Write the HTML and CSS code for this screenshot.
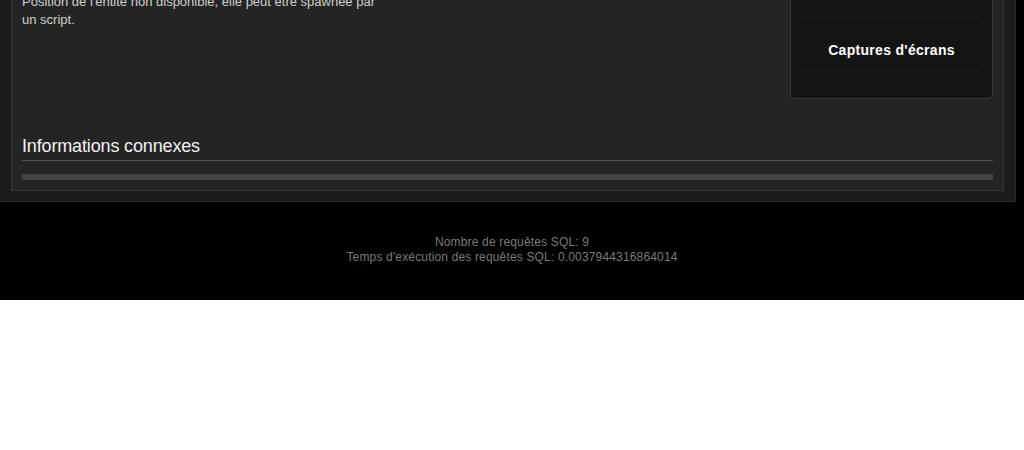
FILE: index.html
```html
<!DOCTYPE html>
<html lang="fr">
<head>
<meta charset="utf-8">
<title>Entité</title>
<link rel="stylesheet" href="styles.css">
</head>
<body>
<div class="site">
  <div class="main">
    <div class="panel">
      <div class="row">
        <p class="desc">Position de l'entité non disponible, elle peut être spawnée par un script.</p>
        <div class="shots">
          <div class="shots-title">Captures d'écrans</div>
        </div>
      </div>
      <h2 class="section-title">Informations connexes</h2>
      <div class="bar"></div>
    </div>
  </div>
  <div class="footer">
    <div>Nombre de requêtes SQL: 9</div>
    <div>Temps d'exécution des requêtes SQL: 0.0037944316864014</div>
  </div>
</div>
</body>
</html>
```
FILE: styles.css
```css
html, body {
  margin: 0;
  padding: 0;
  background: #fff;
  font-family: "Liberation Sans", Arial, sans-serif;
}
.site {
  background: #000;
  overflow: hidden;
}
.main {
  width: 1016px;
  margin-top: -60px;
  background: #1b1b1b;
  border-right: 1px solid #2c2c2c;
  border-bottom: 1px solid #2c2c2c;
  padding: 11px 11px 10px;
  box-sizing: border-box;
}
.panel {
  background: #242424;
  border: 1px solid #383838;
  padding: 10px;
}
.row {
  display: flex;
  justify-content: space-between;
  align-items: flex-start;
}
.desc {
  margin: 31px 0 0;
  width: 365px;
  font-size: 13px;
  line-height: 18px;
  color: #cfcfcf;
}
.shots {
  width: 203px;
  box-sizing: border-box;
  background: #141414;
  border: 1px solid #383838;
  border-radius: 5px;
  padding: 53px 14px 26px;
}
.shots-title {
  border-top: 1px solid #1c1c1c;
  border-bottom: 1px solid #1c1c1c;
  padding: 25px 0 13px;
  font-size: 14px;
  line-height: 16px;
  letter-spacing: 0.3px;
  font-weight: bold;
  color: #fff;
  text-align: center;
}
.section-title {
  margin: 36px 0 0;
  padding-bottom: 3px;
  border-bottom: 1px solid #555;
  font-size: 18px;
  line-height: 22px;
  letter-spacing: -0.15px;
  font-weight: normal;
  color: #f2f2f2;
}
.bar {
  margin-top: 13px;
  height: 6px;
  background: #444;
}
.footer {
  height: 98px;
  box-sizing: border-box;
  padding-top: 33px;
  text-align: center;
  font-size: 12px;
  line-height: 15px;
  letter-spacing: 0.16px;
  color: #7a7a7a;
}
```
